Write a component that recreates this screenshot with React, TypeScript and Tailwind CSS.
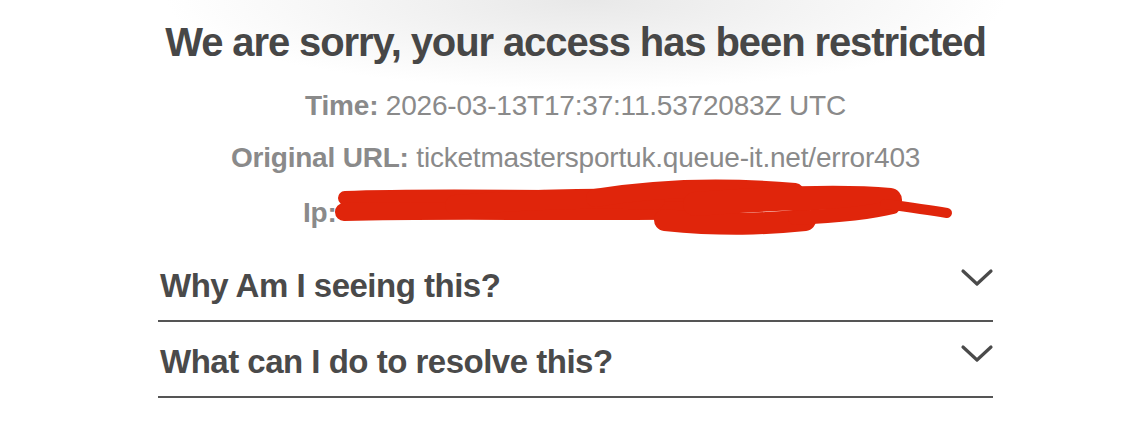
const font = { fontFamily: '"Liberation Sans", Arial, sans-serif' };

const questions = ["Why Am I seeing this?", "What can I do to resolve this?"];

const Chevron = () => (
  <svg width="36" height="22" viewBox="0 0 36 22" fill="none" className="mb-[10px] mr-[-2px]">
    <polyline
      points="4,4 18,17 32,4"
      stroke="#4a4a4a"
      strokeWidth="3.2"
      strokeLinecap="round"
      strokeLinejoin="round"
    />
  </svg>
);

const Scribble = () => (
  <svg
    className="absolute left-[325px] top-[178px]"
    width="640"
    height="70"
    viewBox="0 0 640 70"
    fill="none"
    stroke="#e0250b"
    strokeLinecap="round"
    strokeLinejoin="round"
  >
    <path d="M20 20 C120 16 220 21 380 18" strokeWidth="14" />
    <path d="M19 34 C140 31 260 35 380 32" strokeWidth="18" />
    <path d="M130 27 C200 22 260 19 330 22" strokeWidth="20" />
    <path d="M270 20 C330 10 400 8 470 14" strokeWidth="18" />
    <path d="M340 42 C400 48 440 46 480 42" strokeWidth="22" />
    <path d="M370 26 C450 20 520 18 565 22" strokeWidth="24" />
    <path d="M470 40 C510 38 545 35 568 29" strokeWidth="14" />
    <path d="M560 26 C590 30 610 33 622 35" strokeWidth="10" />
  </svg>
);

export default function App() {
  return (
    <div
      className="relative w-[1128px] h-[437px] overflow-hidden bg-white bg-[radial-gradient(ellipse_420px_90px_at_52%_0,#e8e8e8,#ffffff)]"
      style={font}
    >
      <div className="ml-[158px] w-[835px] pt-[18px]">
        <h1 className="text-center text-[40px] leading-[48px] font-bold tracking-[-1.1px] text-[#474747]">
          We are sorry, your access has been restricted
        </h1>

        <div className="mt-[24px] text-center text-[28px] leading-[32px] tracking-[-0.2px] text-[#8a8a8a]">
          <span className="font-bold">Time:</span> 2026-03-13T17:37:11.5372083Z UTC
        </div>
        <div className="mt-[20px] text-center text-[28px] leading-[32px] tracking-[-0.2px] text-[#8a8a8a]">
          <span className="font-bold">Original URL:</span> ticketmastersportuk.queue-it.net/error403
        </div>
        <div className="mt-[23px] pl-[145px] text-[28px] leading-[32px] tracking-[-0.2px] text-[#8a8a8a]">
          <span className="font-bold">Ip:</span>
        </div>

        <div className="mt-[17px]">
          {questions.map((q) => (
            <div
              key={q}
              className="flex h-[76px] items-center justify-between border-b-2 border-[#555555]"
            >
              <span className="pl-[2px] pt-[6px] text-[33px] font-bold tracking-[-0.5px] text-[#4a4a4a]">
                {q}
              </span>
              <Chevron />
            </div>
          ))}
        </div>
      </div>
      <Scribble />
    </div>
  );
}
